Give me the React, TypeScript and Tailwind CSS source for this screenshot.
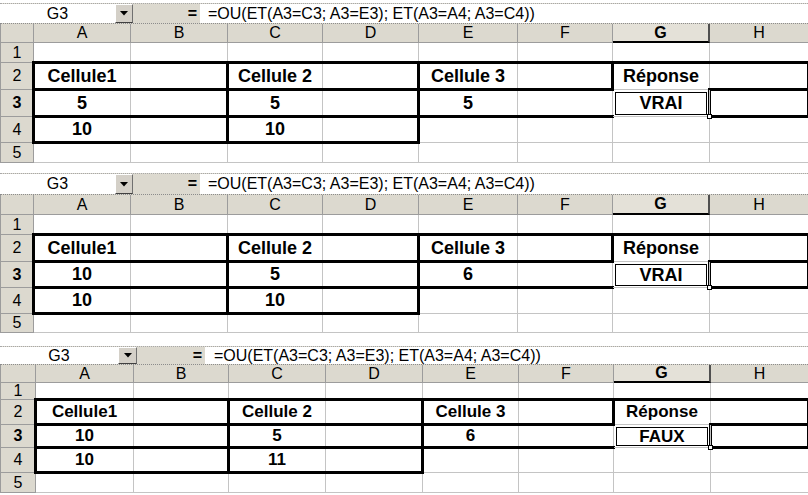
import React from "react";

// Trois captures Excel de la formule =OU(ET(...); ET(...)) empilées.

type Variant = {
  top: string;
  bar: string;
  name: string;
  btn: string;
  eq: string;
  fx: string;
  cols: string;
  rows: string;
  cell: string;
};

const V12: Variant = {
  top: "h-[3px]",
  bar: "h-[21px]",
  name: "w-[115px]",
  btn: "w-[18px]",
  eq: "w-[67px]",
  fx: "pl-[8px]",
  cols: "grid-cols-[33px_97px_97px_95px_96px_99px_95px_97px_99px]",
  rows: "grid-rows-[19px_20px_27px_27px_26px_20px]",
  cell: "text-[18px]",
};

const V2: Variant = {
  ...V12,
  top: "h-[1px]",
  bar: "h-[22px]",
  rows: "grid-rows-[20px_20px_27px_26px_26px_19px]",
};

const V3: Variant = {
  top: "h-[13px]",
  bar: "h-[19px]",
  name: "w-[118px]",
  btn: "w-[19px]",
  eq: "w-[68px]",
  fx: "pl-[9px]",
  cols: "grid-cols-[35px_98px_95px_97px_97px_96px_95px_97px_98px]",
  rows: "grid-rows-[18px_17px_25px_23px_25px_20px]",
  cell: "text-[17px]",
};

const COL_START = [
  "col-start-1",
  "col-start-2",
  "col-start-3",
  "col-start-4",
  "col-start-5",
  "col-start-6",
  "col-start-7",
  "col-start-8",
  "col-start-9",
];
const ROW_START = ["row-start-1", "row-start-2", "row-start-3", "row-start-4", "row-start-5", "row-start-6"];
const LETTERS = ["", "A", "B", "C", "D", "E", "F", "G", "H"];

// bordures épaisses (plages encadrées)
const BOXES = [
  "col-start-2 col-span-2 row-start-3 border-[3px]",
  "col-start-2 col-span-2 row-start-4 border-[3px]",
  "col-start-2 col-span-2 row-start-5 border-[3px]",
  "col-start-4 col-span-2 row-start-3 border-[3px]",
  "col-start-4 col-span-2 row-start-4 border-[3px]",
  "col-start-4 col-span-2 row-start-5 border-[3px]",
  "col-start-6 col-span-2 row-start-3 border-[3px]",
  "col-start-6 col-span-2 row-start-4 border-t-[3px] border-l-[3px] border-b-[3px]",
  "col-start-8 col-span-2 row-start-3 border-t-[3px] border-l-[3px] border-r-[3px]",
  "col-start-9 row-start-3 border-b-[3px]",
  "col-start-9 row-start-4 border-l-[3px] border-r-[3px] border-b-[3px]",
];

function FormulaBar({ v }: { v: Variant }) {
  return (
    <div className={`flex ${v.bar} border-t border-dotted border-t-[#a8a8a8] border-b border-b-[#8c8c8c] bg-[#dcd9cf] text-[16px] text-black`}>
      <div className={`${v.name} flex items-center justify-center bg-white`}>G3</div>
      <div className={`${v.btn} flex items-center justify-center border-t border-l border-t-white border-l-white border-r border-b border-r-[#707070] border-b-[#404040] bg-[#d4d0c8]`}>
        <svg width="8" height="5" viewBox="0 0 8 5">
          <path d="M0 0H8L4 4.5Z" fill="#000" />
        </svg>
      </div>
      <div className={`${v.eq} flex items-center justify-end pr-[3px] font-bold`}>=</div>
      <div className={`flex flex-1 items-center bg-white ${v.fx}`}>=OU(ET(A3=C3; A3=E3); ET(A3=A4; A3=C4))</div>
    </div>
  );
}

function Sheet({ v, vals, answer }: { v: Variant; vals: Record<string, string>; answer: string }) {
  const cells: React.ReactNode[] = [];
  for (let r = 0; r < 6; r++) {
    for (let c = 0; c < 9; c++) {
      const pos = `${COL_START[c]} ${ROW_START[r]}`;
      if (r === 0 && c === 0) {
        cells.push(<div key={`${r}-${c}`} className={`${pos} border-r border-b border-[#9c9c9c] bg-[#dcd9cf]`} />);
      } else if (r === 0) {
        const sel = c === 7;
        cells.push(
          <div
            key={`${r}-${c}`}
            className={`${pos} flex items-center justify-center text-[16px] ${
              sel ? "border-r-2 border-b-2 border-r-[#505050] border-b-black bg-[#e4e1d8] font-bold" : "border-r border-b border-[#9c9c9c] bg-[#dcd9cf]"
            }`}
          >
            {LETTERS[c]}
          </div>,
        );
      } else if (c === 0) {
        cells.push(
          <div
            key={`${r}-${c}`}
            className={`${pos} flex items-center justify-center border-r border-b border-[#9c9c9c] bg-[#dcd9cf] text-[16px] ${r === 3 ? "font-bold" : ""}`}
          >
            {r}
          </div>,
        );
      } else {
        const id = `${LETTERS[c]}${r}`;
        if (id === "G3") {
          cells.push(
            <div key={id} className={`${pos} relative border-r border-b border-[#c4c4c4] pt-[2px] pr-[2px] pb-[1px] pl-[2px]`}>
              <div className={`flex h-full items-center justify-center border border-black font-bold ${v.cell}`}>{answer}</div>
              <div className="absolute right-[-3px] bottom-[-3px] h-[5px] w-[5px] border border-black bg-white" />
            </div>,
          );
        } else {
          cells.push(
            <div key={id} className={`${pos} flex items-center justify-center border-r border-b border-[#c4c4c4] font-bold ${v.cell}`}>
              {vals[id] ?? ""}
            </div>,
          );
        }
      }
    }
  }

  return (
    <div className={`grid ${v.cols} ${v.rows} border-l border-[#9c9c9c]`}>
      {cells}
      {BOXES.map((b) => (
        <div key={b} className={`${b} pointer-events-none m-[-2px_-1px_-1px_-2px] border-black`} />
      ))}
    </div>
  );
}

function Panel({ v, vals, answer }: { v: Variant; vals: Record<string, string>; answer: string }) {
  const all = { A2: "Cellule1", C2: "Cellule 2", E2: "Cellule 3", G2: "Réponse", ...vals };
  return (
    <div className="flex flex-col">
      <div className={v.top} />
      <FormulaBar v={v} />
      <Sheet v={v} vals={all} answer={answer} />
    </div>
  );
}

export default function App() {
  return (
    <div className="h-[495px] w-[808px] overflow-hidden bg-white font-['Liberation_Sans',Arial,sans-serif] text-black">
      <Panel v={V12} vals={{ A3: "5", C3: "5", E3: "5", A4: "10", C4: "10" }} answer="VRAI" />
      <div className="h-[9px]" />
      <Panel v={V2} vals={{ A3: "10", C3: "5", E3: "6", A4: "10", C4: "10" }} answer="VRAI" />
      <Panel v={V3} vals={{ A3: "10", C3: "5", E3: "6", A4: "10", C4: "11" }} answer="FAUX" />
    </div>
  );
}
